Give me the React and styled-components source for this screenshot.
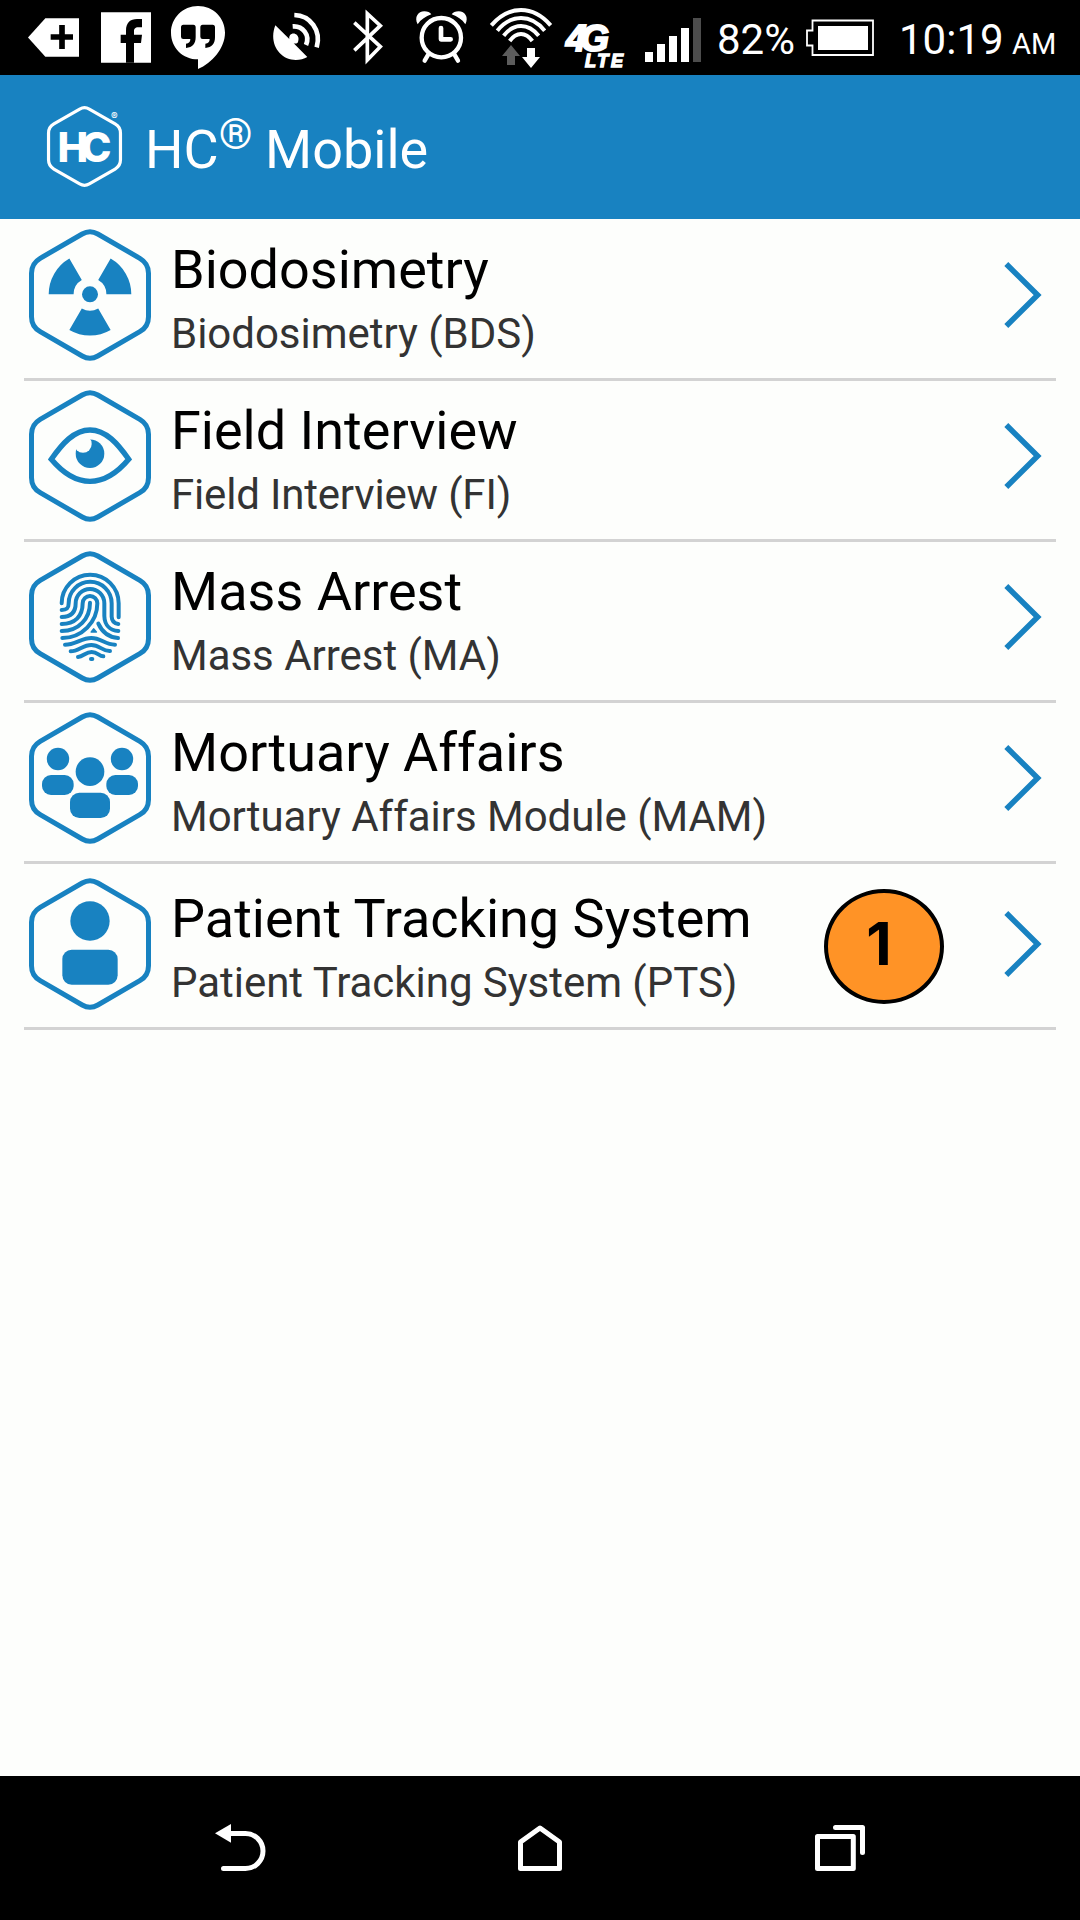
import React from "react";
import styled, { createGlobalStyle } from "styled-components";

const BLUE = "#1882c1";
const PAPER = "#fdfefc";

const GlobalStyle = createGlobalStyle`
  * { box-sizing: border-box; }
  body { margin: 0; background: ${PAPER}; }
`;

const Screen = styled.div`
  display: flex;
  flex-direction: column;
  width: 1080px;
  height: 1920px;
  overflow: hidden;
  background: ${PAPER};
  font-family: Roboto, "Liberation Sans", sans-serif;
`;

const StatusBar = styled.div`
  display: flex;
  flex: none;
  height: 75px;
  padding-left: 28px;
  background: #000;
  color: #fff;
`;

const StatusIcon = styled.svg`
  display: block;
  flex: none;
  height: 75px;
  width: ${(p) => p.$w}px;
  margin-left: ${(p) => p.$gap || 0}px;
  overflow: visible;
`;

const StatusText = styled.span`
  flex: none;
  width: ${(p) => p.$w}px;
  margin-left: ${(p) => p.$gap}px;
  font-size: ${(p) => p.$size}px;
  line-height: ${(p) => p.$line}px;
  white-space: nowrap;
`;

const NetworkText = styled.text`
  font-family: "Liberation Sans", sans-serif;
  font-style: italic;
  font-weight: 700;
  fill: #fff;
  stroke: #fff;
`;

const Header = styled.header`
  display: flex;
  flex: none;
  align-items: flex-start;
  height: 144px;
  padding: 31px 0 0 47px;
  background: ${BLUE};
  color: #fff;
`;

const Logo = styled.svg`
  display: block;
  flex: none;
  width: 75px;
  height: 81px;
  overflow: visible;
`;

const LogoText = styled.text`
  font-family: Inter, "Liberation Sans", sans-serif;
  font-weight: 800;
  fill: #fff;
`;

const AppTitle = styled.h1`
  display: flex;
  margin: 12px 0 0 23px;
  font-size: 54px;
  font-weight: 400;
  line-height: 64px;
  white-space: pre;
`;

const Registered = styled.span`
  width: 33px;
  margin-top: -16px;
  font-size: 43px;
`;

const List = styled.ul`
  flex: 1;
  margin: 0;
  padding: 1px 24px 0;
  list-style: none;
`;

const Row = styled.li`
  display: flex;
  height: ${(p) => (p.$tall ? 166 : 161)}px;
  padding: ${(p) => (p.$tall ? 14 : 9)}px 0 0 5px;
  border-bottom: 3px solid #d3d3d3;
`;

const HexIcon = styled.svg`
  display: block;
  flex: none;
  width: 122px;
  height: 132px;
`;

const Labels = styled.div`
  display: flex;
  flex: 1;
  flex-direction: column;
  padding: 9px 0 0 20px;
`;

const Name = styled.span`
  font-size: 54px;
  line-height: 64px;
  color: #000;
  white-space: nowrap;
`;

const Detail = styled.span`
  margin-top: 7px;
  font-size: 42px;
  line-height: 50px;
  letter-spacing: ${(p) => p.$track || -0.03}px;
  color: #333;
  white-space: nowrap;
`;

const Badge = styled.div`
  display: flex;
  flex: none;
  justify-content: center;
  width: 120px;
  height: 115px;
  margin: 11px 60px 0 0;
  padding: 21px 10px 0 0;
  border: 4px solid #000;
  border-radius: 50%;
  background: #ff9326;
  color: #000;
  font: 700 59px/60px Inter, "Liberation Sans", sans-serif;
`;

const Chevron = styled.svg`
  display: block;
  flex: none;
  width: 52px;
  height: 132px;
`;

const NavBar = styled.nav`
  display: flex;
  flex: none;
  align-items: flex-start;
  height: 144px;
  padding: 48px 0 0 214px;
  background: #000;
`;

const NavIcon = styled.svg`
  display: block;
  flex: none;
  width: ${(p) => p.$w}px;
  height: 48px;
  margin-left: ${(p) => p.$gap || 0}px;
  fill: none;
  stroke: #fff;
  stroke-width: 5;
  stroke-linejoin: round;
  stroke-linecap: round;
`;

const HEX_PATH =
  "M53.2 5 Q61 .5 68.8 5 L110.8 29.300 Q119.5 34.3 119.5 44.3 V87.700 Q119.5 97.700 110.8 102.700 L68.8 127 Q61 131.500 53.2 127 L11.2 102.700 Q2.5 97.700 2.5 87.700 V44.3 Q2.5 34.3 11.2 29.300 Z";

const BLADE = "M-41.3 0 A41.3 41.3 0 0 1 -20.650 -35.770 L-8.2 -14.2 A16.4 16.4 0 0 0 -16.4 0 Z";

const Radiation = () => (
  <g transform="translate(61 65.3)" fill={BLUE}>
    <circle r="8" />
    <path d={BLADE} />
    <path d={BLADE} transform="rotate(120)" />
    <path d={BLADE} transform="rotate(240)" />
  </g>
);

const Eye = () => (
  <g>
    <path
      d="M22.3 69.3 C33 54 45 40 61 40 S89 54 99.7 69.3 C89 82 77 91.4 61 91.4 S33 82 22.3 69.3 Z"
      fill="none"
      stroke={BLUE}
      strokeWidth="5.4"
    />
    <circle cx="61" cy="63.7" r="14.3" fill={BLUE} />
    <circle cx="54" cy="54" r="8.7" fill={PAPER} />
  </g>
);

const Fingerprint = () => (
  <g
    transform="scale(.33333) translate(-87 -33)"
    fill="none"
    stroke={BLUE}
    strokeWidth="12"
    strokeLinecap="round"
    strokeLinejoin="round"
  >
    <path d="M185 190 A85.5 86 0 0 1 356 190 V232" />
    <path d="M185 210 C201 210 206 204 206 190 A64.5 64.5 0 0 1 335 190 V230 Q336 250 355 252" />
    <path d="M185 231 C214 231 227 215 227 190 A43 43 0 0 1 313 190 V228 C314 255 330 272 355 273" />
    <path d="M185 252 C224 252 248 230 248 190 A22 22 0 0 1 292 190 C292 246 246 294 187 294" />
    <path d="M185 273 C236 273 270 236 270 188" />
    <path d="M295 251 Q313 291 354 294" />
    <path d="M195 314 C225 314 245 294 274 294 S315 314 345 314" />
    <path d="M212 334 C236 334 248 315 274 315 S306 334 330 333" />
    <path d="M234 351 C250 350 257 336 275 336 S296 348 310 349" />
    <path d="M273 357 H277" />
    <path d="M274 276 L281 267 L289 276 Z" strokeWidth="5" fill={BLUE} />
  </g>
);

const Group = () => (
  <g transform="scale(.33333) translate(-87 -36)" fill={BLUE}>
    <circle cx="174" cy="177" r="33.5" />
    <circle cx="366" cy="177" r="33.5" />
    <circle cx="270" cy="215" r="43" />
    <rect x="126" y="225" width="95" height="60" rx="27" />
    <rect x="319" y="225" width="95" height="60" rx="27" />
    <rect x="210" y="278" width="120" height="76" rx="28" />
  </g>
);

const Person = () => (
  <g transform="scale(.33333) translate(-87 -54)" fill={BLUE}>
    <circle cx="270" cy="183" r="59" />
    <rect x="187" y="269" width="166" height="105" rx="28" />
  </g>
);

const MODULES = [
  { name: "Biodosimetry", detail: "Biodosimetry (BDS)", Glyph: Radiation },
  { name: "Field Interview", detail: "Field Interview (FI)", Glyph: Eye, track: -0.18 },
  { name: "Mass Arrest", detail: "Mass Arrest (MA)", Glyph: Fingerprint },
  { name: "Mortuary Affairs", detail: "Mortuary Affairs Module (MAM)", Glyph: Group },
  {
    name: "Patient Tracking System",
    detail: "Patient Tracking System (PTS)",
    Glyph: Person,
    badge: "1",
    tall: true,
  },
];

const Status = () => (
  <StatusBar>
    <StatusIcon $w={51} viewBox="84 0 153 225" fill="#fff">
      <path d="M84 112.500 L136 55 H237 V170 H136 Z" />
      <path d="M186 75 V147 M152 111 H219" stroke="#000" strokeWidth="17" />
    </StatusIcon>
    <StatusIcon $w={50} $gap={22} viewBox="303 0 150 225">
      <path fill="#fff" d="M303 37 H453 V188 H303 Z" />
      <path d="M378 188 V129 H362 V104 H378 V92 C378 68 391 57 411 57 H426 V82 H415 C405 82 402 87 402 94 V104 H426 L423 129 H402 V188 Z" />
    </StatusIcon>
    <StatusIcon $w={54} $gap={20} viewBox="513 0 162 225">
      <path
        fill="#fff"
        d="M594 18 C640 18 675 54 675 98 C675 144 636 189 594 207 V178 C548 178 513 143 513 98 C513 54 549 18 594 18 Z"
      />
      <path d="M550 74 H580 Q587 74 587 82 V112 C587 131 578 143 558 144 V131 C567 130 571 126 571 117 H550 Q543 117 543 110 V82 Q543 74 550 74 Z" />
      <path d="M608 74 H638 Q645 74 645 82 V112 C645 131 636 143 616 144 V131 C625 130 629 126 629 117 H608 Q601 117 601 110 V82 Q601 74 608 74 Z" />
    </StatusIcon>
    <StatusIcon $w={48} $gap={48} viewBox="39 0 144 225">
      <path
        fill="#fff"
        d="M46 76 L88 117 C86 105 96 98 106 102 C116 106 118 118 113 128 C109 131 105 131 101 130 L142 171 C125 181 101 183 81 175 C48 160 29 120 46 76 Z"
      />
      <g fill="none" stroke="#fff" strokeWidth="14">
        <path d="M103 45 C150 46 185 91 170 142" />
        <path d="M98 79 C128 77 151 104 138 135" />
      </g>
    </StatusIcon>
    <StatusIcon $w={30} $gap={32} viewBox="280 0 90 225">
      <path
        d="M284 68 L362 140 L323 180 V41 L362 77 L284 151"
        fill="none"
        stroke="#fff"
        strokeWidth="11"
      />
    </StatusIcon>
    <StatusIcon $w={51} $gap={33} viewBox="467 0 153 225">
      <g fill="none" stroke="#fff" strokeWidth="13" strokeLinecap="round">
        <circle cx="543" cy="113" r="59" />
        <path d="M542 84 V118 H571" strokeWidth="14" strokeLinejoin="round" />
        <path d="M504 163 L493 182 M582 163 L593 182" />
      </g>
      <path
        fill="#fff"
        d="M472 73 C461 52 473 34 492 34 C502 34 509 38 513 43 C496 49 482 58 472 73 Z M615 73 C626 52 614 34 595 34 C585 34 578 38 574 43 C591 49 605 58 615 73 Z"
      />
    </StatusIcon>
    <StatusIcon $w={62} $gap={23} viewBox="690 0 186 225">
      <g fill="none" stroke="#fff" strokeWidth="12">
        <path d="M694 76 Q734 30 783 30 T872 76" />
        <path d="M712 92 Q743 54 783 54 T854 92" />
        <path d="M731 107 Q754 78 783 78 T836 107" />
        <path d="M749 123 Q764 102 783 102 T817 123" />
      </g>
      <path fill="#5c5c5c" d="M753 135 L780 168 H765 V195 H741 V168 H726 Z" />
      <path fill="#fff" d="M813 204 L786 171 H801 V144 H825 V171 H840 Z" />
    </StatusIcon>
    <StatusIcon $w={60} $gap={13} viewBox="565 0 60 75">
      <NetworkText x="566" y="50.500" fontSize="37" strokeWidth="2" textLength="43" lengthAdjust="spacing">
        4G
      </NetworkText>
      <NetworkText x="585" y="66.500" fontSize="18" strokeWidth="1.400" textLength="38" lengthAdjust="spacing">
        LTE
      </NetworkText>
    </StatusIcon>
    <StatusIcon $w={56} $gap={20} viewBox="0 0 56 75" fill="#fff">
      <path d="M0 52 H8 V62 H0 Z M12 44 H20 V62 H12 Z M24 36 H32 V62 H24 Z M36 28 H44 V62 H36 Z" />
      <path fill="#4d4d4d" d="M48 18 H56 V62 H48 Z" />
    </StatusIcon>
    <StatusText $w={80} $gap={16} $size={42} $line={80}>82%</StatusText>
    <StatusIcon $w={68} $gap={9} viewBox="806 0 68 75">
      <path
        d="M812.500 20.500 H873 V55 H812.500 V45.500 H807 V30.500 H812.500 Z"
        fill="none"
        stroke="#fff"
        strokeWidth="1.800"
      />
      <path fill="#fff" d="M818 26 H868 V50 H818 Z" />
    </StatusIcon>
    <StatusText $w={107} $gap={25} $size={42} $line={80}>10:19</StatusText>
    <StatusText $w={50} $gap={6} $size={29} $line={89}>AM</StatusText>
  </StatusBar>
);

export default function App() {
  return (
    <Screen>
      <GlobalStyle />
      <Status />
      <Header>
        <Logo viewBox="0 0 75 81">
          <g transform="scale(.6148 .6136)">
            <path d={HEX_PATH} fill="none" stroke="#fff" strokeWidth="5.200" />
          </g>
          <LogoText x="10.500" y="56" fontSize="41" textLength="54" lengthAdjust="spacing">
            HC
          </LogoText>
          <LogoText x="64" y="13.500" fontSize="10" fontWeight="400">
            ®
          </LogoText>
        </Logo>
        <AppTitle>
          HC<Registered>®</Registered> Mobile
        </AppTitle>
      </Header>
      <List>
        {MODULES.map(({ name, detail, Glyph, badge, tall, track }) => (
          <Row key={name} $tall={tall}>
            <HexIcon viewBox="0 0 122 132">
              <path d={HEX_PATH} fill="none" stroke={BLUE} strokeWidth="5" />
              <Glyph />
            </HexIcon>
            <Labels>
              <Name>{name}</Name>
              <Detail $track={track}>{detail}</Detail>
            </Labels>
            {badge && <Badge>{badge}</Badge>}
            <Chevron viewBox="0 0 52 132">
              <path d="M2.300 35 L33.600 66 L2.300 97" fill="none" stroke={BLUE} strokeWidth="5.600" />
            </Chevron>
          </Row>
        ))}
      </List>
      <NavBar>
        <NavIcon $w={52} viewBox="214 1824 52 48">
          <path d="M215 1833.300 L231 1824 V1842.700 Z" fill="#fff" stroke="none" />
          <path d="M229 1833.500 H245.500 A17.500 17.500 0 0 1 245.500 1868.500 H223.500" />
        </NavIcon>
        <NavIcon $w={44} $gap={252} viewBox="518 1824 44 48">
          <path d="M520.500 1868.500 V1842 L540 1828 L559.500 1842 V1868.500 Z" />
        </NavIcon>
        <NavIcon $w={50} $gap={253} viewBox="815 1824 50 48">
          <path d="M817.500 1836.500 H853.300 V1868.500 H817.500 Z M835.500 1827.500 H862.500 V1852.500" />
        </NavIcon>
      </NavBar>
    </Screen>
  );
}
